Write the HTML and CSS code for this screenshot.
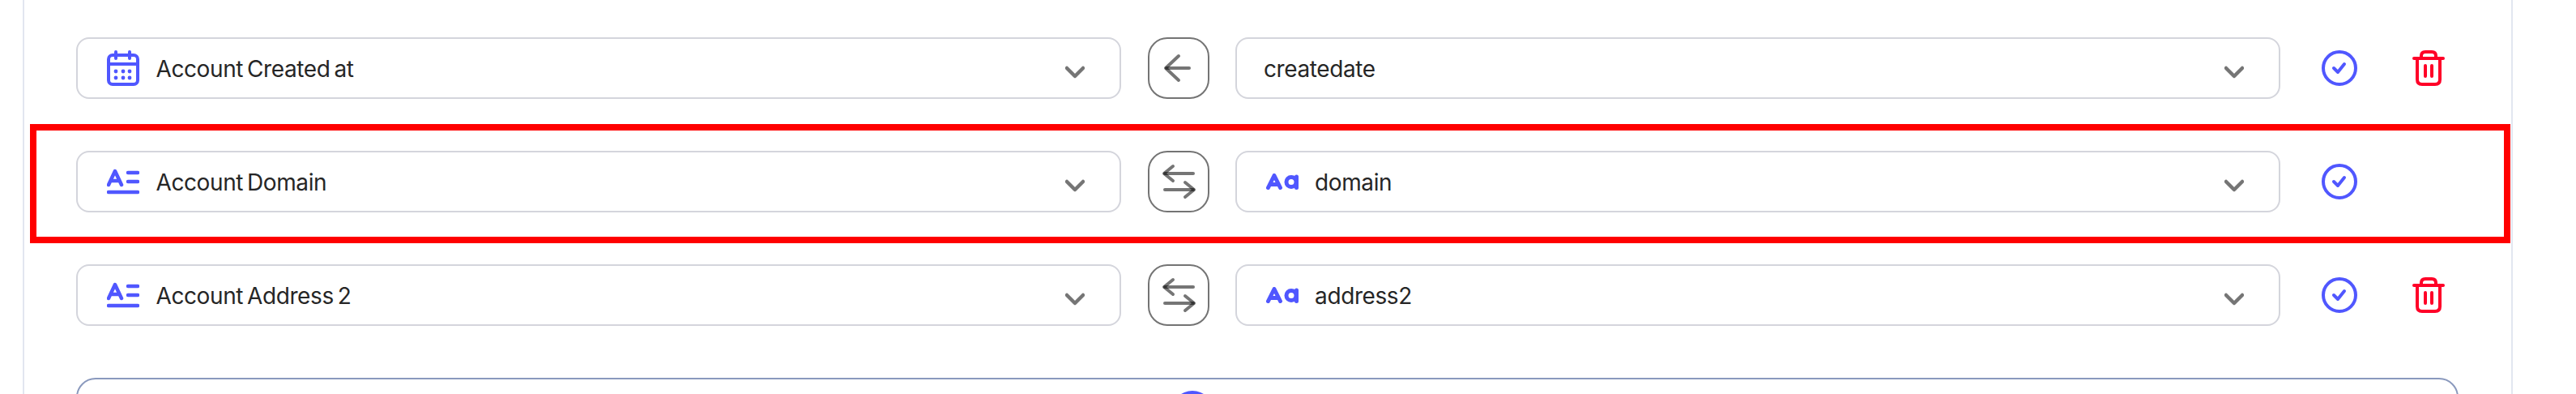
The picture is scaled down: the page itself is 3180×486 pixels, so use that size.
FILE: index.html
```html
<!DOCTYPE html>
<html lang="en">
<head>
<meta charset="utf-8">
<title>Field mapping</title>
<link rel="stylesheet" href="styles.css">
</head>
<body>
<main class="card">
  <div class="row">
    <div class="select">
      <svg class="ico-type" viewBox="0 0 40 44"><rect x="2" y="6" width="36" height="36" rx="5"/><path d="M2 17H38M11 2V10M28 2V10"/><g class="dots"><circle cx="11" cy="26" r="2.4"/><circle cx="20" cy="26" r="2.4"/><circle cx="28" cy="26" r="2.4"/><circle cx="11" cy="34" r="2.4"/><circle cx="20" cy="34" r="2.4"/><circle cx="28" cy="34" r="2.4"/></g></svg>
      <span class="label">Account Created at</span>
      <svg class="chev" viewBox="0 0 24 16"><path d="M2 3L12 13L22 3"/></svg>
    </div>
    <button class="dir" type="button"><svg viewBox="0 0 72 72"><path d="M21 36H49"/><path d="M36 21L20 36L36 51"/></svg></button>
    <div class="select select-plain">
      <span class="label">createdate</span>
      <svg class="chev" viewBox="0 0 24 16"><path d="M2 3L12 13L22 3"/></svg>
    </div>
    <div class="actions">
      <svg class="check" viewBox="0 0 44 44"><circle cx="22" cy="22" r="20"/><path d="M15 22L20 27L28 17"/></svg>
      <svg class="trash" viewBox="0 0 40 44"><path d="M2 10H38M6 10V36Q6 42 12 42H28Q34 42 34 36V10M11 10V7Q11 2 16 2H24Q29 2 29 7V10M16 19V32M24 19V32"/></svg>
    </div>
  </div>

  <div class="row">
    <div class="select">
      <svg class="ico-type ico-text" viewBox="0 0 40 32"><path d="M2 20L10 3L18 20M5 15H15M26 5H38M26 16H38M2 29H38"/></svg>
      <span class="label">Account Domain</span>
      <svg class="chev" viewBox="0 0 24 16"><path d="M2 3L12 13L22 3"/></svg>
    </div>
    <button class="dir" type="button"><svg viewBox="0 0 72 72"><path d="M19 26H54"/><path d="M29 17L18 26L29 35"/><path d="M19 46H54"/><path d="M44 37L55 46L44 55"/></svg></button>
    <div class="select select-inner">
      <svg class="ico-aa" viewBox="0 0 40 20"><path d="M2.5 17.5L10 2.5L17.5 17.5M5 13.5H15"/><circle cx="31" cy="10.5" r="6"/><path d="M37.5 4V17.5"/></svg>
      <span class="label">domain</span>
      <svg class="chev" viewBox="0 0 24 16"><path d="M2 3L12 13L22 3"/></svg>
    </div>
    <div class="actions">
      <svg class="check" viewBox="0 0 44 44"><circle cx="22" cy="22" r="20"/><path d="M15 22L20 27L28 17"/></svg>
    </div>
  </div>

  <div class="row">
    <div class="select">
      <svg class="ico-type ico-text" viewBox="0 0 40 32"><path d="M2 20L10 3L18 20M5 15H15M26 5H38M26 16H38M2 29H38"/></svg>
      <span class="label">Account Address 2</span>
      <svg class="chev" viewBox="0 0 24 16"><path d="M2 3L12 13L22 3"/></svg>
    </div>
    <button class="dir" type="button"><svg viewBox="0 0 72 72"><path d="M19 26H54"/><path d="M29 17L18 26L29 35"/><path d="M19 46H54"/><path d="M44 37L55 46L44 55"/></svg></button>
    <div class="select select-inner">
      <svg class="ico-aa" viewBox="0 0 40 20"><path d="M2.5 17.5L10 2.5L17.5 17.5M5 13.5H15"/><circle cx="31" cy="10.5" r="6"/><path d="M37.5 4V17.5"/></svg>
      <span class="label">address2</span>
      <svg class="chev" viewBox="0 0 24 16"><path d="M2 3L12 13L22 3"/></svg>
    </div>
    <div class="actions">
      <svg class="check" viewBox="0 0 44 44"><circle cx="22" cy="22" r="20"/><path d="M15 22L20 27L28 17"/></svg>
      <svg class="trash" viewBox="0 0 40 44"><path d="M2 10H38M6 10V36Q6 42 12 42H28Q34 42 34 36V10M11 10V7Q11 2 16 2H24Q29 2 29 7V10M16 19V32M24 19V32"/></svg>
    </div>
  </div>

  <button class="add" type="button"><span class="add-dot"></span></button>

  <div class="highlight"></div>
</main>
</body>
</html>
```
FILE: styles.css
```css
html, body {
  margin: 0;
  height: 486px;
  overflow: hidden;
  background: #fff;
}

.card {
  position: relative;
  box-sizing: border-box;
  width: 3074px;
  height: 486px;
  margin-left: 28px;
  padding: 46px 0 0 64.3px;
  border-left: 2px solid #e2e6f0;
  border-right: 2px solid #e2e6f0;
  display: flex;
  flex-direction: column;
  gap: 64px;
  overflow: hidden;
  font-family: Inter, "Liberation Sans", sans-serif;
  font-size: 28px;
  color: #262626;
}

.row {
  display: flex;
  flex: none;
  align-items: center;
  gap: 32.55px;
  height: 76px;
}

.select {
  box-sizing: border-box;
  flex: none;
  width: 1290px;
  height: 76px;
  display: flex;
  align-items: center;
  padding: 0 32px 0 35.7px;
  border: 2px solid #d4d5dc;
  border-radius: 16px;
}

.select-plain {
  padding-left: 32.6px;
}

.label {
  flex: 1;
  padding-top: 1px;
  letter-spacing: -0.4px;
  word-spacing: -2.5px;
}

.ico-type {
  flex: none;
  width: 40px;
  margin-right: 20.5px;
  fill: none;
  stroke: #5057ff;
  stroke-width: 4;
  stroke-linecap: round;
  stroke-linejoin: round;
}

.ico-text {
  stroke-width: 4.5;
}

.dots {
  fill: #5057ff;
  stroke: none;
}

.ico-aa {
  flex: none;
  width: 40px;
  height: 20px;
  margin-right: 20px;
  fill: none;
  stroke: #5057ff;
  stroke-width: 5;
  stroke-linecap: round;
  stroke-linejoin: round;
}

.chev {
  flex: none;
  width: 24px;
  height: 16px;
  margin: 9px 11px 0 0;
  fill: none;
  stroke: #757575;
  stroke-width: 4.5;
  stroke-linecap: round;
  stroke-linejoin: round;
}

.dir {
  box-sizing: border-box;
  flex: none;
  width: 76px;
  height: 76px;
  padding: 0;
  background: #fff;
  border: 2px solid #747474;
  border-radius: 24px;
}

.dir svg {
  display: block;
  width: 72px;
  height: 72px;
  fill: none;
  stroke: #000;
  stroke-opacity: 0.54;
  stroke-width: 4;
  stroke-linecap: round;
  stroke-linejoin: round;
}

.actions {
  display: flex;
  align-items: center;
  gap: 68px;
  margin-left: 18px;
}

.check {
  flex: none;
  width: 44px;
  height: 44px;
  fill: none;
  stroke: #5057ff;
  stroke-width: 4;
  stroke-linecap: round;
  stroke-linejoin: round;
}

.trash {
  flex: none;
  width: 40px;
  height: 44px;
  fill: none;
  stroke: #ff0028;
  stroke-width: 4;
  stroke-linecap: round;
  stroke-linejoin: round;
}

.add {
  box-sizing: border-box;
  flex: none;
  width: 2941px;
  height: 90px;
  padding: 14px 186px 0 0;
  background: #fff;
  border: 2px solid #8a99bd;
  border-radius: 24px;
  display: flex;
  justify-content: center;
  align-items: flex-start;
}

.add-dot {
  display: block;
  width: 52px;
  height: 52px;
  border-radius: 50%;
  background: #5057ff;
}

.highlight {
  position: absolute;
  left: 7px;
  top: 153px;
  box-sizing: border-box;
  width: 3062px;
  height: 147px;
  border: 8px solid #ff0000;
}
```
